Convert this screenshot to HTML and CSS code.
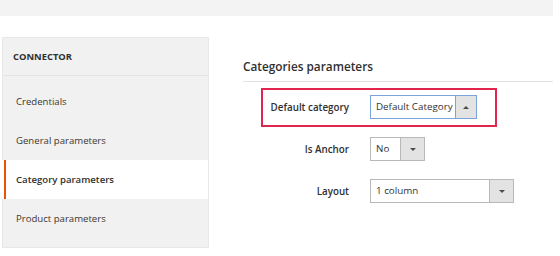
FILE: index.html
```html
<!DOCTYPE html>
<html lang="en">
<head>
    <meta charset="UTF-8">
    <title>Connector - Category parameters</title>
    <link rel="stylesheet" href="styles.css">
</head>
<body>

    <!-- Top header strip -->
    <div class="topbar"></div>

    <div class="page">
        <!-- Sidebar tabs -->
        <div class="sidebar">
            <div class="sidebar-title">Connector</div>
            <ul class="tabs">
                <li class="tab">Credentials</li>
                <li class="tab">General parameters</li>
                <li class="tab active">Category parameters</li>
                <li class="tab">Product parameters</li>
            </ul>
        </div>

        <!-- Main content -->
        <div class="content">
            <h2 class="section-title">Categories parameters</h2>

            <div class="field highlight">
                <label class="field-label">Default category</label>
                <div class="select focus" style="width: 107px;">
                    <span class="select-value">Default Category</span>
                    <span class="select-btn"><span class="arrow up"></span></span>
                </div>
            </div>

            <div class="field">
                <label class="field-label">Is Anchor</label>
                <div class="select" style="width: 55px;">
                    <span class="select-value">No</span>
                    <span class="select-btn"><span class="arrow"></span></span>
                </div>
            </div>

            <div class="field">
                <label class="field-label">Layout</label>
                <div class="select" style="width: 144px;">
                    <span class="select-value">1 column</span>
                    <span class="select-btn"><span class="arrow"></span></span>
                </div>
            </div>
        </div>
    </div>

</body>
</html>
```

FILE: styles.css
```css
body {
    margin: 0;
    padding: 0;
    background-color: #fff;
    color: #333;
    font-family: 'Open Sans', 'Liberation Sans', sans-serif;
}

/* Top strip */
.topbar {
    width: 553px;
    height: 16px;
    background-color: #f3f3f3;
}

.page {
    display: flex;
    align-items: flex-start;
}

/* Sidebar */
.sidebar {
    width: 207px;
    margin-left: 2px;
    margin-top: 21px;
    background-color: #f1f1f1;
    box-sizing: border-box;
    border: 1px solid #e8e8e8;
}

.sidebar-title {
    height: 37px;
    line-height: 37px;
    padding-left: 10px;
    font-size: 9.4px;
    font-weight: 700;
    text-transform: uppercase;
    color: #303030;
    border-bottom: 1px solid #e4e4e4;
}

.tabs {
    list-style: none;
    margin: 0;
    padding: 6px 0 9px;
}

.tab {
    height: 39px;
    line-height: 39px;
    padding-left: 13px;
    font-size: 9.6px;
    color: #41362f;
}

.tab.active {
    font-weight: 600;
    color: #303030;
    background: linear-gradient(to right, #fff 4px, #eb5202 4px, #eb5202 6px, #fff 6px);
    margin-left: -3px;
    padding-left: 16px;
}

/* Main content */
.content {
    flex: 1;
    margin-left: 34px;
    margin-right: 7px;
}

.section-title {
    margin: 41px 0 0;
    padding-bottom: 6px;
    font-size: 11.8px;
    line-height: 18px;
    font-weight: 600;
    color: #303030;
    border-bottom: 1px solid #e3e3e3;
}

.field {
    display: flex;
    align-items: center;
    gap: 21px;
    margin: 3px 0 0 18px;
    padding: 5px 0 6px;
    border: 2px solid transparent;
}

.field.highlight {
    width: 236px;
    box-sizing: border-box;
    margin-top: 6px;
    border-color: #e0264f;
}

.field-label {
    width: 86px;
    flex-shrink: 0;
    text-align: right;
    font-size: 9.8px;
    font-weight: 600;
    color: #303030;
    white-space: nowrap;
}

/* Fake select */
.select {
    display: flex;
    height: 24px;
    box-sizing: border-box;
    border: 1px solid #b8b8b8;
    background-color: #fff;
    flex-shrink: 0;
}

.select.focus {
    border-color: #7ba4d9;
}

.select-value {
    flex: 1;
    padding-left: 5px;
    font-size: 9.8px;
    line-height: 22px;
    color: #333;
    white-space: nowrap;
    overflow: hidden;
}

.select-btn {
    width: 23px;
    display: flex;
    align-items: center;
    justify-content: center;
    background-color: #e3e3e3;
    border-left: 1px solid #b8b8b8;
}

.select.focus .select-btn {
    width: 20px;
    border-left-color: #7ba4d9;
}

.arrow {
    width: 0;
    height: 0;
    border-left: 3px solid transparent;
    border-right: 3px solid transparent;
    border-top: 3px solid #514943;
}

.arrow.up {
    border-top: 0;
    border-bottom: 3px solid #514943;
}
```
